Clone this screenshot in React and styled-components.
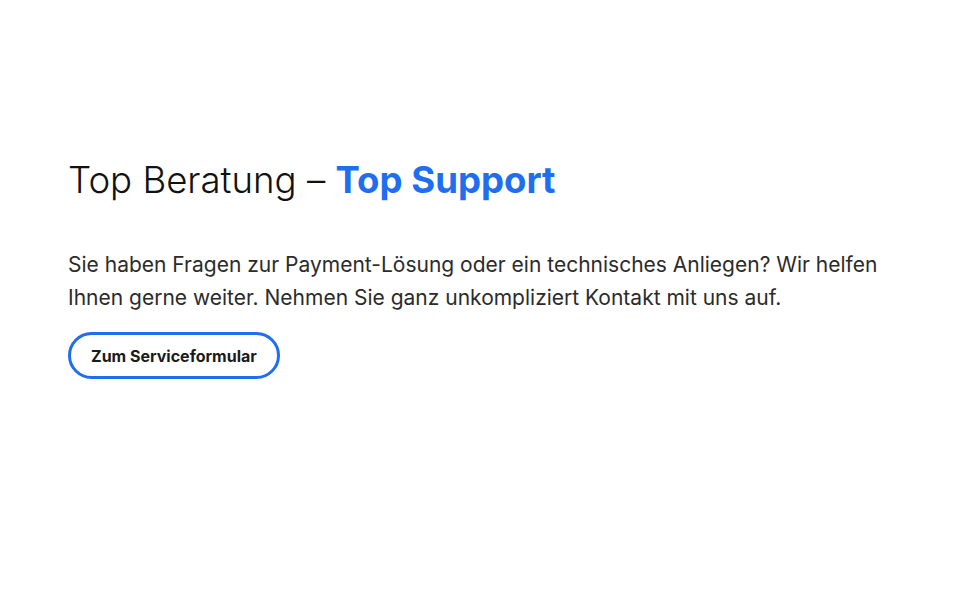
import styled, { createGlobalStyle } from 'styled-components'

const GlobalStyle = createGlobalStyle`
  body {
    margin: 0;
    background: #ffffff;
    font-family: Inter, "Liberation Sans", sans-serif;
  }
`

const Section = styled.section`
  width: 960px;
  height: 600px;
  box-sizing: border-box;
  padding: 156px 68px 0;
  display: flex;
  flex-direction: column;
  align-items: flex-start;
`

const Title = styled.h2`
  margin: 0;
  font-size: 36.6px;
  line-height: 48px;
  font-weight: 300;
  color: #111111;
`

const Accent = styled.span`
  font-weight: 700;
  color: #1f6ef0;
`

const Text = styled.p`
  margin: 44px 0 0;
  max-width: 830px;
  font-size: 21px;
  line-height: 33px;
  color: #2b2b2b;
`

const Button = styled.button`
  margin-top: 18px;
  height: 47px;
  padding: 0 20px;
  border: 3px solid #1f6ef0;
  border-radius: 24px;
  background: #ffffff;
  font-family: Inter, "Liberation Sans", sans-serif;
  font-size: 16px;
  font-weight: 700;
  color: #1a1a1a;
  cursor: pointer;
`

export default function App() {
  return (
    <>
      <GlobalStyle />
      <Section>
        <Title>
          Top Beratung – <Accent>Top Support</Accent>
        </Title>
        <Text>
          Sie haben Fragen zur Payment-Lösung oder ein technisches Anliegen? Wir helfen Ihnen gerne weiter. Nehmen Sie ganz unkompliziert Kontakt mit uns auf.
        </Text>
        <Button>Zum Serviceformular</Button>
      </Section>
    </>
  )
}
